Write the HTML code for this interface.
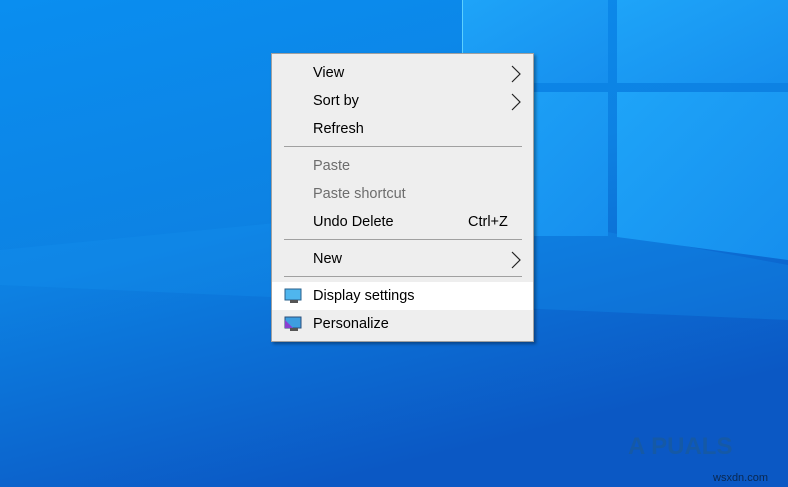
<!DOCTYPE html>
<html><head><style>
body{margin:0;width:788px;height:487px;overflow:hidden;font-family:"Liberation Sans",sans-serif;}
.bg{position:absolute;left:0;top:0}
.menu{position:absolute;left:271px;top:53px;width:263px;height:289px;background:#eeeeee;border:1px solid #a0a0a0;box-shadow:2px 2px 3px rgba(0,0,0,.35);box-sizing:border-box}
.it{position:absolute;left:0;width:261px;height:28px;font-size:14.5px;line-height:28px;color:#000}
.it span{position:absolute;left:41px}
.dis{color:#6d6d6d}
.sep{position:absolute;left:12px;width:238px;height:1px;background:#a0a0a0}
.arr{position:absolute;left:238px;top:6px}
.sc{position:absolute;left:196px!important}
.hl{background:#fff}
</style></head><body>
<svg class="bg" width="788" height="487">
<defs>
<linearGradient id="g" x1="0" y1="0" x2="0.4" y2="1">
<stop offset="0" stop-color="#0a8ef0"/><stop offset="0.5" stop-color="#0d82e3"/><stop offset="1" stop-color="#0b58c4"/>
</linearGradient>
<linearGradient id="p" x1="0" y1="0" x2="1" y2="1">
<stop offset="0" stop-color="#1ea4f8"/><stop offset="1" stop-color="#168fee"/>
</linearGradient>
</defs>
<rect width="788" height="487" fill="url(#g)"/>
<polygon points="0,250 460,205 788,265 788,320 0,285" fill="#1592ee" opacity="0.3"/>
<polygon points="462,0 608,0 608,83 462,83" fill="url(#p)"/>
<polygon points="617,0 788,0 788,83 617,83" fill="url(#p)"/>
<polygon points="462,92 608,92 608,236 462,236" fill="url(#p)"/>
<polygon points="617,92 788,92 788,260 617,237" fill="url(#p)"/>
<line x1="462.5" y1="0" x2="462.5" y2="53" stroke="#5cd0ff" stroke-width="1"/>
<text x="628" y="454" font-family="Liberation Sans" font-weight="bold" font-size="24" fill="#1a5a9a" opacity="0.7">A PUALS</text>
<text x="713" y="481" font-family="Liberation Sans" font-size="11" fill="#0a2850">wsxdn.com</text>
</svg>
<div class="menu">
<div class="it" style="top:5px"><span>View</span><svg class="arr" width="12" height="18"><path d="M2 1 L10 9 L2 17" fill="none" stroke="#222" stroke-width="1.2"/></svg></div>
<div class="it" style="top:33px"><span>Sort by</span><svg class="arr" width="12" height="18"><path d="M2 1 L10 9 L2 17" fill="none" stroke="#222" stroke-width="1.2"/></svg></div>
<div class="it" style="top:61px"><span>Refresh</span></div>
<div class="sep" style="top:92px"></div>
<div class="it dis" style="top:98px"><span>Paste</span></div>
<div class="it dis" style="top:126px"><span>Paste shortcut</span></div>
<div class="it" style="top:154px"><span>Undo Delete</span><span class="sc">Ctrl+Z</span></div>
<div class="sep" style="top:185px"></div>
<div class="it" style="top:191px"><span>New</span><svg class="arr" width="12" height="18"><path d="M2 1 L10 9 L2 17" fill="none" stroke="#222" stroke-width="1.2"/></svg></div>
<div class="sep" style="top:222px"></div>
<div class="it hl" style="top:228px"><svg style="position:absolute;left:12px;top:6px" width="18" height="16"><rect x="1" y="1" width="16" height="11" fill="#4fb6ee" stroke="#2a5f8a"/><rect x="6" y="12" width="8" height="3" fill="#555"/></svg><span>Display settings</span></div>
<div class="it" style="top:256px"><svg style="position:absolute;left:12px;top:6px" width="18" height="16"><rect x="1" y="1" width="16" height="11" fill="#3e9ee0" stroke="#2a4f7a"/><polygon points="1,4 9,12 1,12" fill="#8a3fd0"/><rect x="6" y="12" width="8" height="3" fill="#555"/></svg><span>Personalize</span></div>
</div>
</body></html>
